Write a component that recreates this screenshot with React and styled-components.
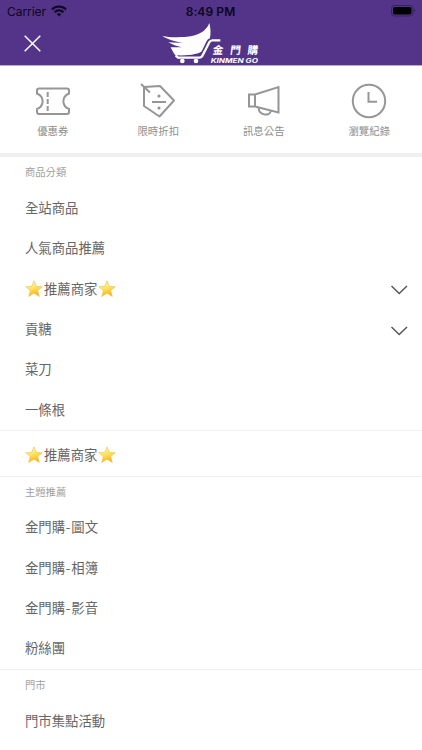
import React from "react";
import styled, { createGlobalStyle } from "styled-components";

const GlobalStyle = createGlobalStyle`
  * { box-sizing: border-box; }
  body {
    margin: 0;
    background: #fff;
    overflow: hidden;
    font-family: "Noto Sans CJK TC", sans-serif;
  }
`;

const Screen = styled.main`
  width: 422px;
  height: 750px;
  overflow: hidden;
  background: #fff;
`;

const Header = styled.header`
  height: 66px;
  background: #533488;
  border-bottom: 1px solid #b7a9cf;
`;

const StatusBar = styled.div`
  height: 22px;
  padding: 0 6px 0 7px;
  display: grid;
  grid-template-columns: 1fr auto 1fr;
  align-items: center;
  color: #0d0620;
  font-family: Inter, sans-serif;
  font-size: 12px;
`;

const Carrier = styled.div`
  display: flex;
  align-items: center;
  gap: 5px;
  letter-spacing: -0.05px;
`;

const Time = styled.div`
  font-weight: 600;
  letter-spacing: 0.1px;
  margin-right: 2px;
`;

const BatterySlot = styled.div`
  display: flex;
  justify-content: flex-end;
`;

const NavBar = styled.div`
  height: 43px;
  display: grid;
  grid-template-columns: 160px 102px 1fr;
`;

const CloseButton = styled.button`
  width: 64px;
  height: 42px;
  padding: 0;
  border: 0;
  background: none;
  display: grid;
  place-items: center;
`;

const LogoSvg = styled.svg`
  display: block;
  width: 102px;
  height: 46px;
  margin-top: -2px;
  overflow: visible;
`;

const Shortcuts = styled.nav`
  height: 91px;
  display: grid;
  grid-template-columns: repeat(4, 1fr);
  border-bottom: 4px solid #efefef;
`;

const Shortcut = styled.a`
  display: flex;
  flex-direction: column;
  align-items: center;
  padding-top: 17px;
  color: #8e8e8e;
  font-size: 10.4px;
  line-height: 16px;
  svg {
    display: block;
    width: 36px;
    height: 36px;
    margin-bottom: 4px;
  }
`;

const Section = styled.section`
  border-bottom: 1px solid #efefef;
  &:last-child {
    border-bottom: 0;
  }
`;

const SectionTitle = styled.h2`
  margin: 0;
  height: 31px;
  padding-left: 25px;
  font-size: 10.3px;
  line-height: 29.5px;
  font-weight: 400;
  color: #a0a0a0;
`;

const Row = styled.a`
  display: flex;
  align-items: center;
  justify-content: space-between;
  height: ${(p) => (p.$single ? "44.6px" : "40.33px")};
  padding: ${(p) => (p.$single ? "4px" : "0")} 14px 0 25px;
  color: #666;
  font-size: 13.35px;
  line-height: 18.5px;
`;

const Label = styled.span`
  display: flex;
  align-items: center;
`;

const Hyphen = styled.span`
  margin: 0 0.8px;
`;

const StarSvg = styled.svg`
  width: 18px;
  height: 18px;
  margin-right: ${(p) => (p.$lead ? "1px" : "0")};
  margin-left: ${(p) => (p.$lead ? "0" : "1px")};
`;

const ChevronSvg = styled.svg`
  width: 18px;
  height: 10px;
  margin-top: 3px;
`;

const iconProps = { fill: "none", stroke: "#969696", strokeWidth: 2 };

const TicketIcon = () => (
  <svg viewBox="0 0 36 36" {...iconProps}>
    <path d="M4 5.500H32Q34 5.500 34 7.500V10.500C26.500 13.500 26.500 23 34 26V29Q34 31 32 31H4Q2 31 2 29V26C9.500 23 9.500 13.500 2 10.500V7.500Q2 5.500 4 5.500Z" />
    <path d="M12.700 9V14M12.700 16V21M12.700 23V28" />
  </svg>
);

const TagIcon = () => (
  <svg viewBox="0 0 36 36" {...iconProps}>
    <path d="M4 4L20 3L34 17.500L19.500 33.500L4 23Z" strokeLinejoin="round" />
    <path d="M1 1L10 9.500M12 19H26" />
    <circle cx="19" cy="13" r="1.600" fill="#929292" stroke="none" />
    <circle cx="19" cy="25" r="1.600" fill="#929292" stroke="none" />
  </svg>
);

const MegaphoneIcon = () => (
  <svg viewBox="0 0 36 36" {...iconProps}>
    <path d="M3 11.500H9L32.500 4V29.500L9 23.500H3ZM9 11.500V23.500" />
    <path d="M12.500 24.500C13 33 24 33.500 25 27.700" />
  </svg>
);

const ClockIcon = () => (
  <svg viewBox="0 0 36 36" {...iconProps}>
    <circle cx="18" cy="18" r="16.200" />
    <path d="M17.500 9V18.700H26" />
  </svg>
);

const WifiIcon = () => (
  <svg width="16" height="12" viewBox="0 0 16 12" fill="none" stroke="#0d0620" strokeWidth="2.2">
    <path d="M1 4.500C5 0.500 11 0.500 15 4.500M3.600 7.200C6.200 4.700 9.800 4.700 12.400 7.200" />
    <path d="M5.600 9.100C7 7.900 9 7.900 10.400 9.100L8 11.500Z" fill="#0d0620" stroke="none" />
  </svg>
);

const BatteryIcon = () => (
  <svg width="25" height="12" viewBox="0 0 25 12">
    <rect x="0.500" y="0.500" width="21.500" height="10.500" rx="3" fill="none" stroke="#372061" />
    <rect x="2" y="2" width="18.500" height="7.500" rx="1.700" fill="#000" />
    <path d="M23.200 4Q25.200 5.700 23.200 7.500Z" fill="#372061" />
  </svg>
);

const CloseIcon = () => (
  <svg width="17" height="17" viewBox="0 0 17 17" stroke="#fff" strokeWidth="1.5">
    <path d="M0.700 0.700L16.300 16.300M16.300 0.700L0.700 16.300" />
  </svg>
);

const Star = ({ lead }) => (
  <StarSvg $lead={lead} viewBox="0 0 18 18">
    <defs>
      <linearGradient id="starFill" x1="0" y1="0" x2="0.3" y2="1">
        <stop offset="0" stopColor="#fffbd0" />
        <stop offset="0.5" stopColor="#ffe967" />
        <stop offset="1" stopColor="#f7b51c" />
      </linearGradient>
    </defs>
    <path
      d="M9 0.800L11.300 6.300L17.300 6.700L12.700 10.600L14.300 16.500L9 13.200L3.700 16.500L5.300 10.600L0.700 6.700L6.700 6.300Z"
      fill="url(#starFill)"
      stroke="#eec04a"
      strokeWidth="0.6"
      strokeLinejoin="round"
    />
  </StarSvg>
);

const Chevron = () => (
  <ChevronSvg viewBox="0 0 18 10" fill="none" stroke="#555" strokeWidth="1.4">
    <path d="M1.500 1L9.200 8.600L17 1" />
  </ChevronSvg>
);

const Logo = () => (
  <LogoSvg viewBox="30 60 306 138">
    <g fill="#fff">
      <path d="M37 108C60 113 78 112 94 111C122 111 163 106 178 69C186 100 181 133 160 151C147 163 118 168 76 166C70 158 65 149 62 142L95 142C80 139 67 134 55 127L100 129C75 125 52 118 37 108Z" />
      <circle cx="97" cy="183" r="7" />
      <circle cx="138" cy="183" r="7" />
    </g>
    <path
      d="M148 170Q153 170 156 163L174 126Q178 119 186 119"
      fill="none"
      stroke="#533488"
      strokeWidth="10"
    />
    <path
      d="M77 166L84 173H148Q155 173 158 166L178 127Q181 121 187 121H211"
      fill="none"
      stroke="#fff"
      strokeWidth="7"
    />
    <g fill="#fff">
      <text
        transform="translate(187 163) skewX(-7)"
        fontFamily="Noto Sans CJK TC, sans-serif"
        fontSize="32"
        letterSpacing="20"
        fontWeight="700"
      >
        金門購
      </text>
      <text
        x="182"
        y="189"
        fontFamily="Inter, sans-serif"
        fontStyle="italic"
        fontSize="18"
        fontWeight="700"
        textLength="142"
        lengthAdjust="spacingAndGlyphs"
      >
        KINMEN GO
      </text>
    </g>
  </LogoSvg>
);

const shortcuts = [
  { label: "優惠券", Icon: TicketIcon },
  { label: "限時折扣", Icon: TagIcon },
  { label: "訊息公告", Icon: MegaphoneIcon },
  { label: "瀏覽紀錄", Icon: ClockIcon },
];

const sections = [
  {
    title: "商品分類",
    items: [
      { label: "全站商品" },
      { label: "人氣商品推薦" },
      { label: "推薦商家", starred: true, expandable: true },
      { label: "貢糖", expandable: true },
      { label: "菜刀" },
      { label: "一條根" },
    ],
  },
  { items: [{ label: "推薦商家", starred: true }] },
  {
    title: "主題推薦",
    items: [
      { label: "金門購", kind: "圖文" },
      { label: "金門購", kind: "相簿" },
      { label: "金門購", kind: "影音" },
      { label: "粉絲團" },
    ],
  },
  { title: "門市", items: [{ label: "門市集點活動" }] },
];

export default function App() {
  return (
    <>
      <GlobalStyle />
      <Screen>
        <Header>
          <StatusBar>
            <Carrier>
              Carrier
              <WifiIcon />
            </Carrier>
            <Time>8:49 PM</Time>
            <BatterySlot>
              <BatteryIcon />
            </BatterySlot>
          </StatusBar>
          <NavBar>
            <CloseButton aria-label="Close">
              <CloseIcon />
            </CloseButton>
            <Logo />
          </NavBar>
        </Header>
        <Shortcuts>
          {shortcuts.map(({ label, Icon }) => (
            <Shortcut key={label}>
              <Icon />
              {label}
            </Shortcut>
          ))}
        </Shortcuts>
        {sections.map((section, i) => (
          <Section key={i}>
            {section.title && <SectionTitle>{section.title}</SectionTitle>}
            {section.items.map((item, n) => (
              <Row key={n} $single={!section.title}>
                <Label>
                  {item.starred && <Star lead />}
                  {item.label}
                  {item.kind && <Hyphen>-</Hyphen>}
                  {item.kind}
                  {item.starred && <Star />}
                </Label>
                {item.expandable && <Chevron />}
              </Row>
            ))}
          </Section>
        ))}
      </Screen>
    </>
  );
}
